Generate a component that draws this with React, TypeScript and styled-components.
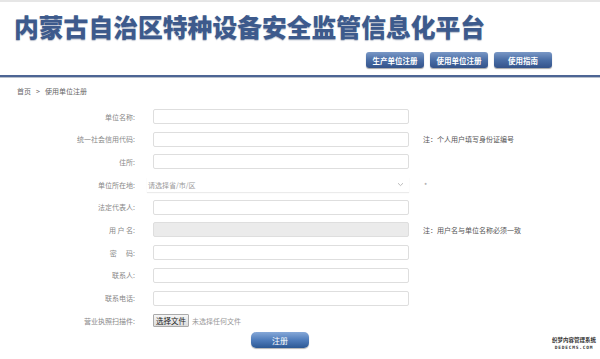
import React, { FC } from 'react'
import styled, { createGlobalStyle } from 'styled-components'

const GlobalStyle = createGlobalStyle`
  html, body {
    margin: 0;
    padding: 0;
    background: #fff;
  }
  body {
    font-family: "Noto Sans CJK SC", "Liberation Sans", sans-serif;
  }
`

const Page = styled.div`
  position: relative;
  width: 600px;
  height: 359px;
  overflow: hidden;
  border-top: 2px solid #e6e6e6;
  box-sizing: border-box;
`

const Header = styled.header`
  display: flex;
  flex-direction: column;
  border-bottom: 2px solid #4d6594;
  box-shadow: 0 1px 0 #b8c0cc;
`

const Title = styled.h1`
  margin: 11px 0 0 14px;
  font-size: 24.8px;
  line-height: 27px;
  font-weight: 900;
  color: #3d5a8c;
  text-shadow: 0 1px 1px rgba(40, 60, 100, 0.35);
  white-space: nowrap;
`

const Nav = styled.nav`
  display: flex;
  justify-content: flex-end;
  gap: 6px;
  padding: 12px 48px 7px 0;
`

const NavButton = styled.a`
  display: flex;
  align-items: center;
  justify-content: center;
  width: 58px;
  height: 16px;
  border-radius: 3px;
  background: linear-gradient(#7a98c6, #4a6ea6 50%, #34538a);
  box-shadow: 0 1px 1px rgba(0, 0, 0, 0.35);
  color: #fff;
  font-size: 7.5px;
  font-weight: 700;
  text-decoration: none;
`

const Crumb = styled.div`
  display: flex;
  gap: 5px;
  padding: 9px 0 0 17px;
  font-size: 7px;
  line-height: 10px;
  color: #666;
`

const Form = styled.form`
  display: flex;
  flex-direction: column;
  gap: 7.7px;
  padding-top: 13px;
`

const Row = styled.div`
  display: flex;
  align-items: center;
  height: 15px;
`

const Label = styled.label`
  width: 135px;
  margin-right: 18px;
  text-align: right;
  font-size: 7px;
  color: #888;
  white-space: pre;
`

const Input = styled.div<{ $disabled?: boolean }>`
  width: 256px;
  height: 15px;
  box-sizing: border-box;
  border: 1px solid #dedede;
  border-radius: 2px;
  background: ${({ $disabled }) => ($disabled ? '#ebebeb' : '#fff')};
`

const Select = styled.div`
  display: flex;
  align-items: center;
  justify-content: space-between;
  width: 262px;
  height: 15px;
  margin-left: -6px;
  padding: 0 5px 0 1px;
  box-sizing: border-box;
  box-shadow: 0 1px 1px rgba(0, 0, 0, 0.08);
  font-size: 7px;
  color: #999;
`

const Note = styled.span<{ $faint?: boolean }>`
  margin-left: ${({ $faint }) => ($faint ? '15px' : '14px')};
  font-size: 7px;
  color: ${({ $faint }) => ($faint ? '#999' : '#555')};
  white-space: nowrap;
`

const FileButton = styled.span`
  padding: 1px 2px;
  border: 1px solid #aaa;
  border-radius: 1px;
  background: linear-gradient(#f6f6f6, #dcdcdc);
  font-size: 7.5px;
  line-height: 9px;
  color: #222;
`

const FileHint = styled.span`
  margin-left: 3px;
  font-size: 7px;
  color: #999;
`

const SubmitRow = styled.div`
  display: flex;
  padding: 4px 0 0 251px;
`

const Submit = styled.button`
  width: 58px;
  height: 16px;
  border: none;
  border-radius: 5px;
  background: linear-gradient(#86a8d8, #4f7cbb 50%, #2c5894);
  box-shadow: 0 1px 1px rgba(0, 0, 0, 0.3);
  color: #fff;
  font-family: inherit;
  font-size: 8px;
  padding: 0;
`

const Watermark = styled.div`
  position: absolute;
  right: 4px;
  bottom: 8px;
  display: flex;
  flex-direction: column;
  align-items: center;
  line-height: 7px;
  color: #333;
`

const MarkCn = styled.span`
  font-size: 5.5px;
  font-weight: 700;
`

const MarkEn = styled.span`
  font-family: "DejaVu Sans Mono", monospace;
  font-size: 4.5px;
  font-weight: 700;
  letter-spacing: 0.8px;
`

const Chevron: FC = () => (
  <svg width="7" height="5" viewBox="0 0 7 5">
    <path d="M1 1.2 L3.5 3.6 L6 1.2" fill="none" stroke="#aaa" strokeWidth="0.8" />
  </svg>
)

interface Field {
  label: string
  note?: string
  kind?: 'input' | 'disabled' | 'select'
}

const fields: Field[] = [
  { label: '单位名称:' },
  { label: '统一社会信用代码:', note: '注：个人用户填写身份证编号' },
  { label: '住所:' },
  { label: '单位所在地:', kind: 'select', note: '*' },
  { label: '法定代表人:' },
  { label: '用 户 名:', kind: 'disabled', note: '注：用户名与单位名称必须一致' },
  { label: '密      码:' },
  { label: '联系人:' },
  { label: '联系电话:' },
]

export default function App() {
  return (
    <Page>
      <GlobalStyle />
      <Header>
        <Title>内蒙古自治区特种设备安全监管信息化平台</Title>
        <Nav>
          <NavButton>生产单位注册</NavButton>
          <NavButton>使用单位注册</NavButton>
          <NavButton>使用指南</NavButton>
        </Nav>
      </Header>
      <Crumb>
        <span>首页</span>
        <span>&gt;</span>
        <span>使用单位注册</span>
      </Crumb>
      <Form>
        {fields.map((f) => (
          <Row key={f.label}>
            <Label>{f.label}</Label>
            {f.kind === 'select' ? (
              <Select>
                <span>请选择省/市/区</span>
                <Chevron />
              </Select>
            ) : (
              <Input $disabled={f.kind === 'disabled'} />
            )}
            {f.note && <Note $faint={f.kind === 'select'}>{f.note}</Note>}
          </Row>
        ))}
        <Row>
          <Label>营业执照扫描件:</Label>
          <FileButton>选择文件</FileButton>
          <FileHint>未选择任何文件</FileHint>
        </Row>
      </Form>
      <SubmitRow>
        <Submit type="button">注册</Submit>
      </SubmitRow>
      <Watermark>
        <MarkCn>织梦内容管理系统</MarkCn>
        <MarkEn>DEDECMS.COM</MarkEn>
      </Watermark>
    </Page>
  )
}
